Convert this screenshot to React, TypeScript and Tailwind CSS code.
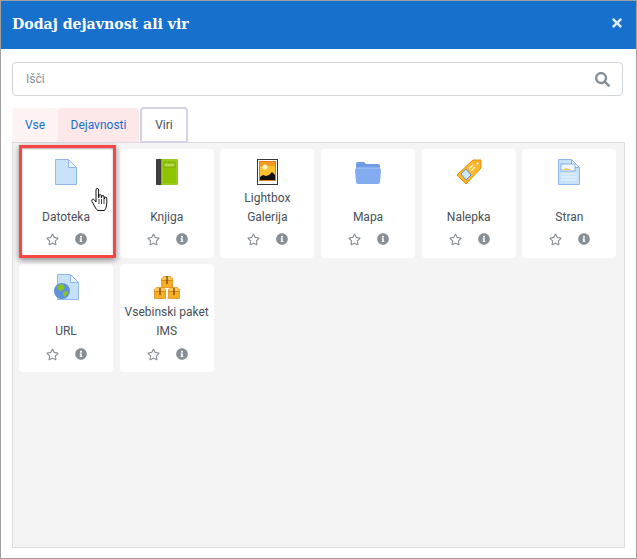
import { FaInfoCircle, FaRegStar, FaSearch, FaTimes } from "react-icons/fa";
import type { ReactNode } from "react";

const FileIcon = () => (
  <svg width="22" height="26" viewBox="0 0 22 26">
    <path d="M.5.5h13l8 8v17H.5z" fill="#c7e1f9" stroke="#8fb8f0" />
    <path d="M13.5.5v8h8z" fill="#e8f3fd" stroke="#8fb8f0" />
  </svg>
);

const BookIcon = () => (
  <svg width="22" height="26" viewBox="0 0 22 26">
    <rect x="0" y="0" width="22" height="26" rx="1" fill="#8fc400" />
    <rect x="0" y="0" width="5" height="26" rx="1" fill="#3f3f3f" />
    <rect x="5" y="0" width="1" height="26" fill="#6f8f1c" />
    <rect x="8" y="4" width="11" height="4" fill="#b6dc45" stroke="#6f9a0a" strokeWidth="0.7" />
    <rect x="6" y="1" width="15" height="24" fill="none" stroke="#b0d850" strokeWidth="0.8" />
  </svg>
);

const GalleryIcon = () => (
  <svg width="21" height="26" viewBox="0 0 21 26">
    <rect x="0.5" y="0.5" width="20" height="25" fill="#fff" stroke="#3a3a3a" />
    <rect x="2.5" y="2.5" width="16" height="19" fill="#fbc02d" stroke="#e8801a" />
    <rect x="3" y="3" width="15" height="4" fill="#f39a20" />
    <circle cx="8" cy="8" r="2.5" fill="#fff6c8" />
    <path d="M3 21v-3l3-2 3 1 3-1 3-3 3 3v5z" fill="#111" />
  </svg>
);

const FolderIcon = () => (
  <svg width="26" height="23" viewBox="0 0 26 23">
    <path d="M1 3q0-2 2-2h6l2 2h12q2 0 2 2v3H1z" fill="#6f9ae6" />
    <path d="M0 9q0-2 2-2h22q2 0 2 2l-1 12q0 2-2 2H3q-2 0-2-2z" fill="#82abf0" />
    <path d="M1 7h24" stroke="#a9c6f5" />
  </svg>
);

const TagIcon = () => (
  <svg width="26" height="26" viewBox="0 0 26 26">
    <path d="M17 1h8v8L10 25 1 16z" fill="#fbb829" stroke="#e68a0c" strokeLinejoin="round" />
    <circle cx="21.5" cy="4.5" r="1.5" fill="#fff" stroke="#e68a0c" strokeWidth="0.6" />
    <path d="M5 15l5-5 5 6-5 5z" fill="#cfe6fb" stroke="#5f95dc" />
    <path d="M13 10l4-4M15 12l4-4" stroke="#fff3c4" strokeWidth="1.4" />
  </svg>
);

const PageIcon = () => (
  <svg width="22" height="26" viewBox="0 0 22 26">
    <path d="M.5.5h13l8 8v17H.5z" fill="#c7e1f9" stroke="#8fb8f0" />
    <path d="M13.5.5v8h8z" fill="#e8f3fd" stroke="#8fb8f0" />
    <rect x="3" y="5" width="14" height="7" fill="#f2f6fb" stroke="#6f97cf" strokeWidth="0.7" />
    <path d="M4 11l4-2 6 2z" fill="#f3c66b" />
    <path d="M3 15h16M3 18h16M3 21h16" stroke="#eef6fd" />
  </svg>
);

const UrlIcon = () => (
  <svg width="25" height="26" viewBox="0 0 25 26">
    <path d="M3.500.5h13l8 8v17h-21z" fill="#c7e1f9" stroke="#8fb8f0" />
    <path d="M16.500.5v8h8z" fill="#e8f3fd" stroke="#8fb8f0" />
    <circle cx="8" cy="17" r="8" fill="#5e92dc" />
    <path d="M3 12l5-2 3 3-2 3-3 1-2-2zM9 18l4-1 1 3-4 3z" fill="#8cc21f" />
  </svg>
);

const BoxesIcon = () => (
  <svg width="26" height="23" viewBox="0 0 26 23">
    <g stroke="#d98a10" strokeWidth="0.7">
      <path d="M7.500 2.500l2-2h7l2 2v9h-11z" fill="#f8ae22" />
      <path d="M.5 13.500l2-2h7l2 2v9h-11z" fill="#f8ae22" />
      <path d="M14.500 13.500l2-2h7l2 2v9h-11z" fill="#f8ae22" />
    </g>
    <path d="M8 1h10v3H8zM1 12h10v3H1zM15 12h10v3H15z" fill="#fcc655" />
    <path d="M7.500 4.500h11M.5 15.500h11M14.500 15.500h11" stroke="#d98a10" />
    <path d="M13 0v8M6 12v7M20 12v7" stroke="#6b3d0a" strokeWidth="1.200" />
  </svg>
);

const HandCursor = () => (
  <svg width="18" height="26" viewBox="0 0 18 26">
    <path
      d="M5 2q0-1.500 1.300-1.500T7.600 2v8l.4-3q1.300-1 2.200 0l.2 3 .4-2q1.300-1 2.200 0l.2 3 .4-1.500q1.300-.8 2.100.2.600 4.300-.3 8.300-.6 3-1.900 4.500H7q-1.500-.7-2.500-2.500L1 13.500q-.7-1.500.4-2.200 1-.5 2 .5L5 14z"
      fill="#fff"
      stroke="#111"
      strokeWidth="1"
      strokeLinejoin="round"
    />
    <path d="M8 11v5M10.500 11v5M13 11v5" stroke="#111" strokeWidth="0.8" />
  </svg>
);

interface Resource {
  lines: string[];
  icon: ReactNode;
}

const resources: Resource[] = [
  { lines: ["Datoteka"], icon: <FileIcon /> },
  { lines: ["Knjiga"], icon: <BookIcon /> },
  { lines: ["Lightbox", "Galerija"], icon: <GalleryIcon /> },
  { lines: ["Mapa"], icon: <FolderIcon /> },
  { lines: ["Nalepka"], icon: <TagIcon /> },
  { lines: ["Stran"], icon: <PageIcon /> },
  { lines: ["URL"], icon: <UrlIcon /> },
  { lines: ["Vsebinski paket", "IMS"], icon: <BoxesIcon /> },
];

function ResourceCard({ item, short }: { item: Resource; short: boolean }) {
  return (
    <div className={short ? "flex h-[108px] flex-col items-center rounded-[4px] bg-white pt-[10px] pb-[12px]" : "flex h-[109px] flex-col items-center rounded-[4px] bg-white pt-[10px] pb-[13px]"}>
      <div className="flex h-[26px] items-center justify-center">{item.icon}</div>
      <div className="flex flex-1 flex-col items-center justify-end text-[12px] leading-[19px] text-[#495057]">
        {item.lines.map((line) => (
          <span key={line} className="whitespace-nowrap">{line}</span>
        ))}
      </div>
      <div className={short ? "mt-[7px] flex h-[12px] w-full items-center pl-[27px] text-[#868e96]" : "mt-[6px] flex h-[12px] w-full items-center pl-[27px] text-[#868e96]"}>
        <FaRegStar className="w-[13px] text-[13px]" />
        <FaInfoCircle className="ml-[16px] w-[12px] text-[12px]" />
      </div>
    </div>
  );
}

export default function App() {
  return (
    <div className="flex h-[559px] w-[637px] flex-col border border-[#a0a0a0] bg-white font-['Roboto',sans-serif]">
      <div className="relative flex h-[48px] shrink-0 items-center bg-[#1670cc] pb-[2px] pl-[11px]">
        <h1 className="font-['DejaVu_Serif_Condensed','DejaVu_Serif',serif] text-[15.700px] font-bold text-white">Dodaj dejavnost ali vir</h1>
        <FaTimes className="absolute top-[15px] right-[12px] text-[14px] text-[#dbe8f6]" />
      </div>

      <div className="flex flex-1 flex-col px-[11px] pt-[13px] pb-[10px]">
        <div className="flex h-[34px] w-[611px] items-center justify-between rounded-[4px] border border-[#ced4da] pr-[12px] pl-[13px]">
          <span className="text-[12px] text-[#868e96]">Išči</span>
          <FaSearch className="text-[15px] text-[#868e96]" />
        </div>

        <div className="relative z-10 mt-[12px] flex h-[34px] items-end text-[12px] text-[#1670cc]">
          <div className="flex h-[34px] w-[46px] items-center justify-center rounded-t-[4px] bg-[#fdf3f3]">Vse</div>
          <div className="flex h-[34px] w-[81px] items-center justify-center rounded-t-[4px] bg-[#fce8e8]">Dejavnosti</div>
          <div className="ml-px flex h-[36px] w-[48px] translate-y-[1px] items-center justify-center rounded-t-[4px] border-2 border-[#d5d1e6] bg-white text-[#495057]">Viri</div>
        </div>

        <div className="relative flex-1 border border-[#dcdcdc] bg-[#f4f4f4] p-[6px]">
          <div className="grid grid-cols-[repeat(6,94px)] gap-x-[6.680px] gap-y-[6px]">
            {resources.map((item, i) => (
              <ResourceCard key={item.lines[0]} item={item} short={i > 5} />
            ))}
          </div>
          <div className="absolute top-[2px] left-[6px] h-[113px] w-[97px] border-[3px] border-[#fb4444] shadow-[0_2px_6px_rgba(0,0,0,0.45),inset_0_1px_2px_rgba(0,0,0,0.3)]" />
          <div className="absolute top-[45px] left-[78px]">
            <HandCursor />
          </div>
        </div>
      </div>
    </div>
  );
}
